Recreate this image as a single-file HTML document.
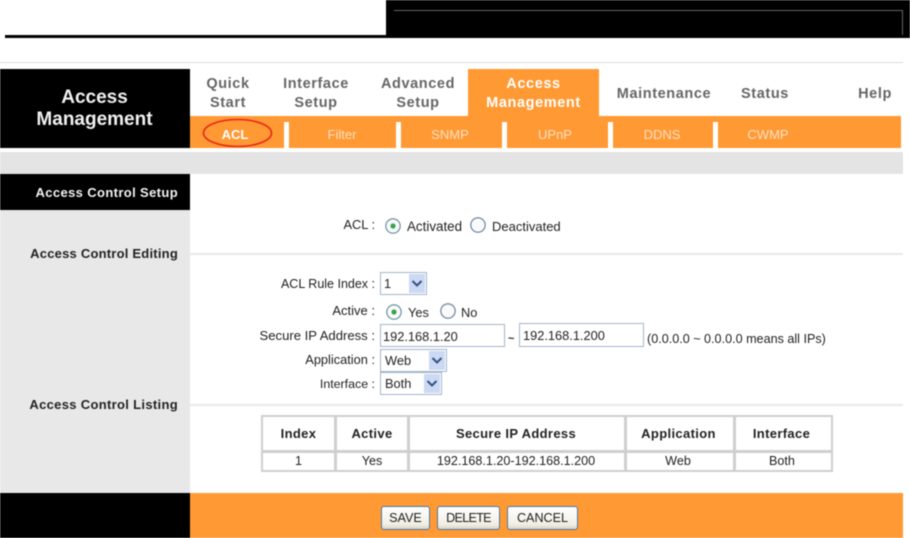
<!DOCTYPE html>
<html>
<head>
<meta charset="utf-8">
<style>
html,body{margin:0;padding:0;background:#fff;}
#p{position:relative;width:910px;height:538px;overflow:hidden;background:#fff;font-family:"Liberation Sans",sans-serif;color:#222;filter:blur(.45px);}
#p div{position:absolute;white-space:nowrap;}
.t{font-size:12.8px;line-height:14px;}
.r{text-align:right;}
.nav{font-weight:bold;font-size:14.5px;line-height:19px;color:#666;text-align:center;letter-spacing:.6px;}
.sub{font-size:13px;line-height:16px;color:#ffe0c2;text-align:center;}
.sep{background:#fff;width:5px;top:122px;height:27px;}
.side{font-weight:bold;font-size:13px;letter-spacing:.37px;line-height:14px;text-align:right;width:178px;left:0;color:#222;}
.box{background:#fff;border:1px solid #a3b6ca;box-sizing:border-box;font-size:12.8px;line-height:21px;padding-left:3px;color:#222;}
.arr{background:#cbd9f5;width:16px;}
.hr{background:#e8e8e8;height:2px;left:190px;width:713px;}
.cell{text-align:center;background:#fff;}
.th{font-weight:bold;font-size:13px;letter-spacing:.35px;line-height:33px;top:417px;height:33px;color:#222;}
.td{font-size:12.6px;line-height:17px;top:453px;height:17px;color:#222;}
.btn{box-sizing:border-box;top:506px;height:24px;border:1px solid #4a78a8;border-radius:3px;background:linear-gradient(#fff,#f0eee4 80%,#d8d4c4);font-size:12.6px;line-height:22px;text-align:center;color:#222;}
</style>
</head>
<body>
<div id="p">
<div style="left:5px;top:35px;width:381px;height:3px;background:#000"></div>
<div style="left:386px;top:0;width:524px;height:38px;background:#000"></div>
<div style="left:394px;top:10px;width:508px;height:1px;background:#666"></div>
<div style="left:902px;top:10px;width:1px;height:25px;background:#666"></div>

<div style="left:0;top:62px;width:903px;height:1px;background:#ddd"></div>
<div style="left:0;top:69px;width:190px;height:79px;background:#000"></div>
<div style="left:0;top:87px;width:189px;color:#f0f0f0;font-weight:bold;font-size:19px;line-height:22px;text-align:center">Access<br>Management</div>

<div style="left:190px;top:116px;width:711px;height:32px;background:#ff9933"></div>
<div style="left:468px;top:69px;width:131px;height:47px;background:#ff9933"></div>

<div class="nav" style="left:190px;top:75px;width:76px">Quick<br>Start</div>
<div class="nav" style="left:270px;top:75px;width:92px">Interface<br>Setup</div>
<div class="nav" style="left:372px;top:75px;width:92px">Advanced<br>Setup</div>
<div class="nav" style="left:468px;top:75px;width:131px;color:#fff">Access<br>Management</div>
<div class="nav" style="left:604px;top:85px;width:120px">Maintenance</div>
<div class="nav" style="left:730px;top:85px;width:70px">Status</div>
<div class="nav" style="left:848px;top:85px;width:54px">Help</div>

<div class="sub" style="left:196px;top:127px;width:78px;font-weight:bold;color:#fff">ACL</div>
<svg style="position:absolute;left:200px;top:116px" width="76" height="34"><ellipse cx="37.5" cy="17" rx="34" ry="13.5" fill="none" stroke="#e8261a" stroke-width="1.6"/></svg>
<div class="sep" style="left:284px"></div>
<div class="sep" style="left:396px"></div>
<div class="sep" style="left:502px"></div>
<div class="sep" style="left:608px"></div>
<div class="sep" style="left:713px"></div>
<div class="sub" style="left:302px;top:127px;width:80px">Filter</div>
<div class="sub" style="left:410px;top:127px;width:80px">SNMP</div>
<div class="sub" style="left:515px;top:127px;width:80px">UPnP</div>
<div class="sub" style="left:622px;top:127px;width:80px">DDNS</div>
<div class="sub" style="left:728px;top:127px;width:80px">CWMP</div>

<div style="left:0;top:152px;width:903px;height:22px;background:#e4e4e4"></div>
<div style="left:0;top:174px;width:190px;height:36px;background:#000"></div>
<div style="left:0;top:210px;width:190px;height:283px;background:#e8e8e8"></div>
<div class="side" style="top:186px;color:#f2f2f2">Access Control Setup</div>
<div class="side" style="top:247px;letter-spacing:.22px">Access Control Editing</div>
<div class="side" style="top:398px;letter-spacing:.32px">Access Control Listing</div>

<div class="hr" style="top:253px"></div>
<div class="hr" style="top:404px"></div>

<!-- ACL row -->
<div class="t r" style="left:280px;top:218px;width:95px">ACL :</div>
<svg style="position:absolute;left:384px;top:217px" width="18" height="18"><circle cx="9" cy="9" r="7.2" fill="#fafafa" stroke="#5d8a9a" stroke-width="1.1"/><circle cx="9" cy="9" r="2.6" fill="#3da24c"/></svg>
<div class="t" style="left:407px;top:220px;font-size:13.4px">Activated</div>
<svg style="position:absolute;left:469px;top:216px" width="18" height="18"><circle cx="9" cy="9" r="7.2" fill="#fafafa" stroke="#5d7a9a" stroke-width="1.1"/></svg>
<div class="t" style="left:492px;top:220px;font-size:13px">Deactivated</div>

<!-- Rule index -->
<div class="t r" style="left:250px;top:277px;width:125px;font-size:12.5px">ACL Rule Index :</div>
<div class="box" style="left:380px;top:272px;width:47px;height:23px">1</div>
<div class="arr" style="left:409px;top:274px;height:19px"></div>
<svg style="position:absolute;left:409px;top:274px" width="16" height="19"><path d="M3.5 7L8 11.5L12.5 7" fill="none" stroke="#33527f" stroke-width="2"/></svg>

<div class="t r" style="left:280px;top:304px;width:95px;font-size:13px">Active :</div>
<svg style="position:absolute;left:385px;top:303px" width="18" height="18"><circle cx="9" cy="9" r="7.2" fill="#fafafa" stroke="#5d8a9a" stroke-width="1.1"/><circle cx="9" cy="9" r="2.6" fill="#3da24c"/></svg>
<div class="t" style="left:408px;top:306px">Yes</div>
<svg style="position:absolute;left:439px;top:302px" width="18" height="18"><circle cx="9" cy="9" r="7.2" fill="#fafafa" stroke="#5d7a9a" stroke-width="1.1"/></svg>
<div class="t" style="left:461px;top:306px">No</div>

<div class="t r" style="left:240px;top:329px;width:135px;font-size:13.1px">Secure IP Address :</div>
<div class="box" style="left:380px;top:324px;width:125px;height:23px;line-height:23px;padding-left:2px">192.168.1.20</div>
<div class="t" style="left:508px;top:332px;font-size:11px;font-weight:bold">~</div>
<div class="box" style="left:519px;top:323px;width:125px;height:24px;line-height:23px;padding-left:3px">192.168.1.200</div>
<div class="t" style="left:647px;top:332px;font-size:12.6px">(0.0.0.0 ~ 0.0.0.0 means all IPs)</div>

<div class="t r" style="left:280px;top:353px;width:95px">Application :</div>
<div class="box" style="left:380px;top:349px;width:67px;height:23px;padding-left:4px">Web</div>
<div class="arr" style="left:429px;top:351px;height:19px"></div>
<svg style="position:absolute;left:429px;top:351px" width="16" height="19"><path d="M3.5 7L8 11.5L12.5 7" fill="none" stroke="#33527f" stroke-width="2"/></svg>

<div class="t r" style="left:280px;top:377px;width:95px;font-size:12.4px">Interface :</div>
<div class="box" style="left:380px;top:372px;width:62px;height:23px;padding-left:4px">Both</div>
<div class="arr" style="left:424px;top:374px;height:19px"></div>
<svg style="position:absolute;left:424px;top:374px" width="16" height="19"><path d="M3.5 7L8 11.5L12.5 7" fill="none" stroke="#33527f" stroke-width="2"/></svg>

<!-- Table -->
<div style="left:261px;top:415px;width:572px;height:57px;background:#cfcfcf"></div>
<div class="cell th" style="left:263px;width:71px">Index</div>
<div class="cell th" style="left:337px;width:70px">Active</div>
<div class="cell th" style="left:410px;width:212px;padding-right:2px">Secure IP Address</div>
<div class="cell th" style="left:627px;width:103px;padding-right:3px">Application</div>
<div class="cell th" style="left:736px;width:91px;padding-right:4px">Interface</div>
<div class="cell td" style="left:263px;width:71px">1</div>
<div class="cell td" style="left:337px;width:70px">Yes</div>
<div class="cell td" style="left:410px;width:212px;padding-right:2px">192.168.1.20-192.168.1.200</div>
<div class="cell td" style="left:627px;width:102px;padding-right:4px">Web</div>
<div class="cell td" style="left:736px;width:92px;padding-right:3px">Both</div>

<!-- Footer -->
<div style="left:0;top:493px;width:190px;height:45px;background:#000"></div>
<div style="left:190px;top:493px;width:713px;height:45px;background:#ff9933"></div>
<div class="btn" style="left:381px;width:49px">SAVE</div>
<div class="btn" style="left:437px;width:63px;letter-spacing:-.7px">DELETE</div>
<div class="btn" style="left:507px;width:71px">CANCEL</div>
</div>
</body>
</html>
